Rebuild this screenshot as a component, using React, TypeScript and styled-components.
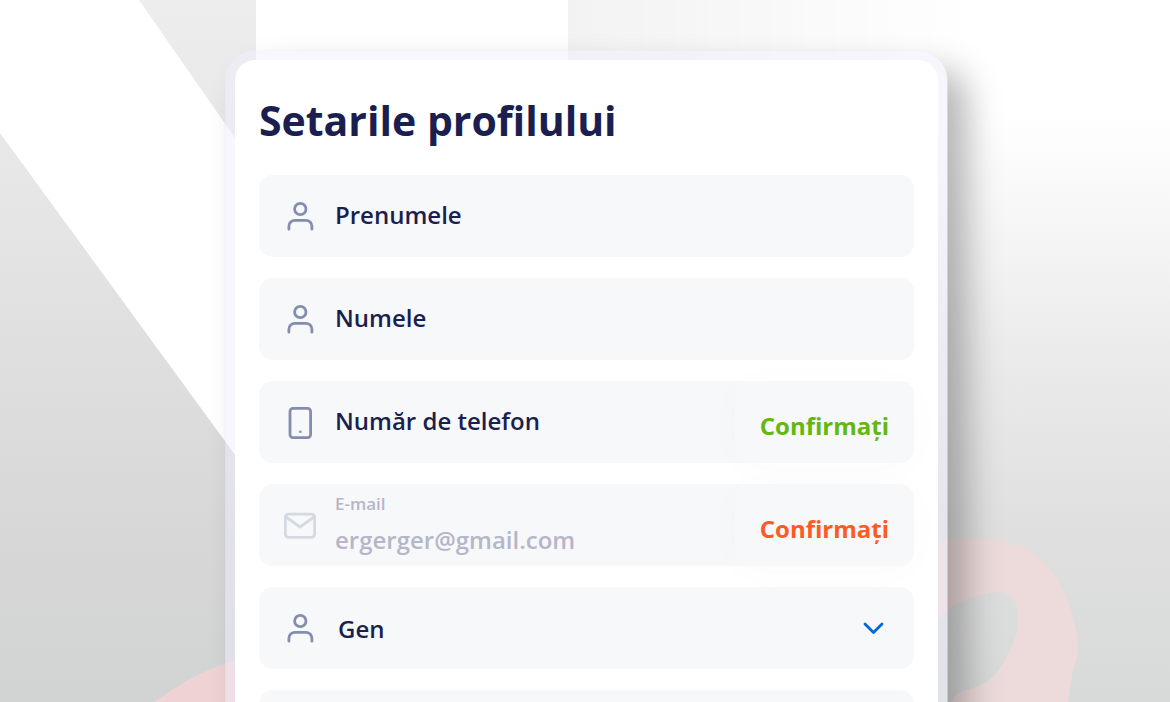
import React from "react";
import styled, { createGlobalStyle } from "styled-components";

const GlobalStyle = createGlobalStyle`
  *, *::before, *::after { box-sizing: border-box; }
  body {
    margin: 0;
    font-family: "Open Sans", "Noto Sans", sans-serif;
    color: #1b1f4f;
  }
`;

const Page = styled.main`
  position: relative;
  height: 100vh;
  overflow: hidden;
  padding: 50px 222px 0 225px;
  background:
    linear-gradient(#ededed 0%, #e6e6e6 28%, #dfdfdf 50%, #d6d7d6 76%, #d2d4d3 100%) 0 0 / 40% 100% no-repeat,
    linear-gradient(to right, rgba(0, 0, 0, 0.05) 48%, rgba(0, 0, 0, 0) 84%),
    linear-gradient(#ffffff 16%, #f6f6f6 32%, #ebebeb 50%, #dfe0df 74%, #d8dad9 100%);
`;

const Backdrop = styled.svg`
  position: absolute;
  inset: 0;
  width: 100%;
  height: 100%;
`;

const Card = styled.form`
  position: relative;
  display: flex;
  flex-direction: column;
  gap: 21px;
  min-height: 100vh;
  padding: 24px;
  border: 10px solid rgba(238, 238, 250, 0.47);
  border-radius: 30px;
  background: #ffffff;
  background-clip: padding-box;
  box-shadow: 20px 20px 34px rgba(0, 0, 0, 0.28);
`;

const Title = styled.h1`
  margin: 0 0 -4px;
  padding: 7px 0 8px;
  font-size: 41px;
  line-height: 59px;
  font-weight: 700;
`;

const Field = styled.div`
  display: flex;
  align-items: center;
  gap: 19px;
  height: 82px;
  flex-shrink: 0;
  padding: 0 25px;
  border-radius: 14px;
  background: #f7f8fa;
`;

const Icon = styled.svg<{ $muted?: boolean }>`
  flex: none;
  width: 32px;
  height: 32px;
  margin-top: 2px;
  fill: none;
  stroke: ${(p) => (p.$muted ? "#d4d9e2" : "#838dae")};
  stroke-width: 2.8;
  stroke-linecap: round;
  stroke-linejoin: round;
`;

const Stack = styled.div`
  display: flex;
  flex: 1;
  flex-direction: column;
  gap: 8px;
  min-width: 0;
  padding-top: 2px;
`;

const SmallLabel = styled.label`
  font-size: 17px;
  line-height: 22px;
  font-weight: 600;
  color: #b5b6c9;
`;

const Input = styled.input`
  flex: 1;
  width: 100%;
  min-width: 0;
  padding: 0 0 2px;
  border: 0;
  outline: 0;
  background: transparent;
  font: 600 24px/34px "Open Sans", "Noto Sans", sans-serif;
  color: #1b1f4f;
  &::placeholder { color: #1b1f4f; opacity: 1; }
  &:disabled { color: #b5b6c9; }
`;

const SelectWrap = styled.div`
  display: flex;
  flex: 1;
  align-items: center;
`;

const Select = styled.select`
  flex: 1;
  min-width: 0;
  padding: 2px 3px 0;
  appearance: none;
  border: 0;
  outline: 0;
  background: transparent;
  font: 600 24px/34px "Open Sans", "Noto Sans", sans-serif;
  color: #1b1f4f;
`;

const Chevron = styled.svg`
  flex: none;
  width: 32px;
  height: 32px;
  fill: none;
  stroke: #0066e0;
  stroke-width: 2.8;
  stroke-linecap: round;
  stroke-linejoin: round;
  pointer-events: none;
`;

const Confirm = styled.button<{ $tone: string }>`
  flex: none;
  align-self: stretch;
  margin-right: -25px;
  padding: 8px 25px 0;
  border: 0;
  border-radius: 14px;
  background: transparent;
  box-shadow: 0 4px 40px rgba(40, 90, 60, 0.02);
  font: 700 24px/34px "Open Sans", "Noto Sans", sans-serif;
  color: ${(p) => p.$tone};
  cursor: pointer;
`;

const UserIcon = () => (
  <Icon viewBox="0 0 32 32" aria-hidden="true">
    <circle cx="16.3" cy="8" r="5.7" />
    <path d="M4.9 28.2v-2.9a6 6 0 0 1 6-6h11a6 6 0 0 1 6 6v2.9" />
  </Icon>
);

const PhoneIcon = () => (
  <Icon viewBox="0 0 32 32" aria-hidden="true">
    <rect x="6" y="1.4" width="20.6" height="29.2" rx="3" />
    <circle cx="16.3" cy="24.7" r="1.3" fill="#838dae" stroke="none" />
  </Icon>
);

const MailIcon = () => (
  <Icon viewBox="0 0 32 32" $muted aria-hidden="true">
    <rect x="1.4" y="4.1" width="29.2" height="23.2" rx="3" />
    <path d="M2 7l14 10L30 7" />
  </Icon>
);

export default function App() {
  return (
    <>
      <GlobalStyle />
      <Page>
        <Backdrop viewBox="0 0 1170 702" preserveAspectRatio="xMidYMin slice" aria-hidden="true">
          <path d="M0 0H139L260 174V489L0 133Z" fill="#ffffff" />
          <path d="M256 0H568V100H256Z" fill="#ffffff" />
          <path d="M155 702Q198 669 240 660V702Z" fill="#efd3d4" />
          <path
            d="M930 541C960 537 990 537 1008 542C1028 547 1045 559 1057 579C1069 599 1078 627 1078 650C1078 659 1073 667 1072 675L1068 702H952C954 695 959 692 970 689C985 684 993 679 1000 668C1010 653 1019 635 1018 617C1018 600 1010 590 995 592C970 595 950 606 938 619L930 628Z"
            fill="#eddbdb"
          />
        </Backdrop>
        <Card>
          <Title>Setarile profilului</Title>
          <Field>
            <UserIcon />
            <Input aria-label="Prenumele" placeholder="Prenumele" />
          </Field>
          <Field>
            <UserIcon />
            <Input aria-label="Numele" placeholder="Numele" />
          </Field>
          <Field>
            <PhoneIcon />
            <Input type="tel" aria-label="Număr de telefon" placeholder="Număr de telefon" />
            <Confirm type="button" $tone="#62b80f">Confirmați</Confirm>
          </Field>
          <Field>
            <MailIcon />
            <Stack>
              <SmallLabel htmlFor="email">E-mail</SmallLabel>
              <Input id="email" type="email" defaultValue="ergerger@gmail.com" disabled />
            </Stack>
            <Confirm type="button" $tone="#ff5a24">Confirmați</Confirm>
          </Field>
          <Field>
            <UserIcon />
            <SelectWrap>
              <Select aria-label="Gen" defaultValue="Gen">
                <option>Gen</option>
              </Select>
              <Chevron viewBox="0 0 32 32" aria-hidden="true">
                <path d="M8 12l8.5 8.5L25 12" />
              </Chevron>
            </SelectWrap>
          </Field>
          <Field />
        </Card>
      </Page>
    </>
  );
}
